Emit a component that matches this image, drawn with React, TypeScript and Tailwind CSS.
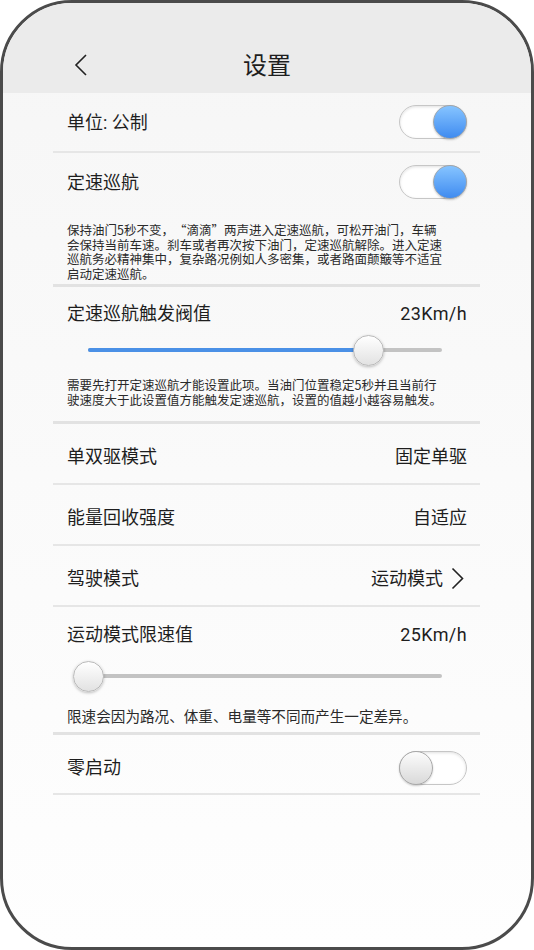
import { ReactNode } from "react";

const font = { fontFamily: 'Roboto, "Noto Sans CJK SC", sans-serif' };
const cjk = { fontFamily: '"Noto Sans CJK SC", Roboto, sans-serif' };

function Toggle({ on }: { on: boolean }) {
    return (
        <div className="relative w-[68px] h-[34px] rounded-full border border-[#c6c6c6] bg-white shadow-[inset_0_1px_3px_rgba(0,0,0,0.12)]">
            <div
                className={
                    on
                        ? "absolute top-[-1px] right-[-1px] w-[34px] h-[34px] rounded-full border border-[#9fa6ad] bg-gradient-to-b from-[#86c4ff] to-[#3f8bf0] shadow-[0_1px_2px_rgba(0,0,0,0.2)]"
                        : "absolute top-[-1px] left-[-1px] w-[34px] h-[34px] rounded-full border border-[#a8a8a8] bg-gradient-to-b from-[#fcfcfc] to-[#d9d9d9] shadow-[0_1px_2px_rgba(0,0,0,0.2)]"
                }
            />
        </div>
    );
}

function Slider({ pct }: { pct: number }) {
    return (
        <div className="relative h-[31px] ml-[35px] mr-[38px]">
            <div className="absolute left-0 right-0 top-[13px] h-[4px] rounded-full bg-[#c3c3c3]" />
            <div className="absolute left-0 top-[13px] h-[4px] rounded-full bg-[#4a90e6]" style={{ width: `${pct}%` }} />
            <div
                className="absolute top-0 w-[31px] h-[31px] -ml-[15px] rounded-full border border-[#b9b9b9] bg-gradient-to-b from-[#ffffff] to-[#e2e2e2] shadow-[0_1px_3px_rgba(0,0,0,0.25)]"
                style={{ left: `${pct}%` }}
            />
        </div>
    );
}

function Divider({ thick }: { thick?: boolean }) {
    return <div className={thick ? "h-[3px] bg-[#e2e2e2]" : "h-[2px] bg-[#e6e6e6]"} />;
}

function Row({ label, right }: { label: string; right: ReactNode }) {
    return (
        <div className="h-[59px] pt-[6px] pl-[14px] pr-[13px] flex items-center justify-between">
            <span className="text-[18px] text-[#1e1e1e]">{label}</span>
            {right}
        </div>
    );
}

function Note({ lines, size }: { lines: ReactNode[]; size: "sm" | "md" }) {
    return (
        <div
            className={size === "sm" ? "pl-[14px] text-[12.5px] leading-[14.5px] text-[#2a2a2a]" : "pl-[14px] text-[14.6px] leading-[18px] text-[#2a2a2a]"}
            style={cjk}
        >
            {lines.map((l, i) => (
                <div key={i} className="whitespace-nowrap">{l}</div>
            ))}
        </div>
    );
}

// full-width curly quotes
const Lq = () => <span className="inline-block w-[1em] text-right">“</span>;
const Rq = () => <span className="inline-block w-[1em] text-left">”</span>;

export default function App() {
    return (
        <div className="w-[534px] h-[950px] bg-white" style={font}>
            <div className="h-full rounded-[72px] border-[3px] border-[#4b4b4b] overflow-hidden flex flex-col bg-gradient-to-b from-[#f6f6f6] to-[#fefefe]">
                {/* title bar */}
                <div className="h-[90px] shrink-0 bg-[#ebebeb] flex items-center justify-center relative">
                    <svg className="absolute left-[71px] top-[50px]" width="14" height="24" viewBox="0 0 14 24" fill="none">
                        <path d="M12 2 L2 12 L12 22" stroke="#222" strokeWidth="1.6" />
                    </svg>
                    <span className="text-[24px] text-[#1e1e1e] mt-[36px]">设置</span>
                </div>

                <div className="ml-[50px] w-[427px]">
                    <div className="h-[58px] pl-[14px] pr-[13px] flex items-center justify-between">
                        <span className="text-[18px] text-[#1e1e1e]">单位: 公制</span>
                        <Toggle on />
                    </div>
                    <Divider />

                    <div className="h-[56px] pt-[2px] pl-[14px] pr-[13px] flex items-center justify-between">
                        <span className="text-[18px] text-[#1e1e1e]">定速巡航</span>
                        <Toggle on />
                    </div>
                    <div className="mt-[14px] mb-[3px]">
                        <Note
                            size="sm"
                            lines={[
                                <>保持油门5秒不变，<Lq />滴滴<Rq />两声进入定速巡航，可松开油门，车辆</>,
                                "会保持当前车速。刹车或者再次按下油门，定速巡航解除。进入定速",
                                "巡航务必精神集中，复杂路况例如人多密集，或者路面颠簸等不适宜",
                                "启动定速巡航。",
                            ]}
                        />
                    </div>
                    <Divider thick />

                    <div className="pt-[14px] pb-[14px]">
                        <div className="h-[24px] pl-[14px] pr-[13px] flex items-center justify-between text-[18px] text-[#1e1e1e]">
                            <span>定速巡航触发阀值</span>
                            <span className="tracking-[0.4px]">23Km/h</span>
                        </div>
                        <div className="mt-[10px]">
                            <Slider pct={79} />
                        </div>
                        <div className="mt-[12px]">
                            <Note
                                size="sm"
                                lines={[
                                    "需要先打开定速巡航才能设置此项。当油门位置稳定5秒并且当前行",
                                    "驶速度大于此设置值方能触发定速巡航，设置的值越小越容易触发。",
                                ]}
                            />
                        </div>
                    </div>
                    <Divider thick />

                    <Row label="单双驱模式" right={<span className="text-[18px] text-[#1e1e1e]">固定单驱</span>} />
                    <Divider />
                    <Row label="能量回收强度" right={<span className="text-[18px] text-[#1e1e1e]">自适应</span>} />
                    <Divider />
                    <Row
                        label="驾驶模式"
                        right={
                            <span className="flex items-center gap-[8px] text-[18px] text-[#1e1e1e]">
                                运动模式
                                <svg width="13" height="23" viewBox="0 0 13 23" fill="none" className="mr-[3px]">
                                    <path d="M1.5 1.5 L11.5 11.5 L1.5 21.5" stroke="#222" strokeWidth="1.6" />
                                </svg>
                            </span>
                        }
                    />
                    <Divider />

                    <div className="pt-[15px] pb-[7px]">
                        <div className="h-[24px] pl-[14px] pr-[13px] flex items-center justify-between text-[18px] text-[#1e1e1e]">
                            <span>运动模式限速值</span>
                            <span className="tracking-[0.4px]">25Km/h</span>
                        </div>
                        <div className="mt-[15px]">
                            <Slider pct={0} />
                        </div>
                        <div className="mt-[15px]">
                            <Note size="md" lines={["限速会因为路况、体重、电量等不同而产生一定差异。"]} />
                        </div>
                    </div>
                    <Divider thick />

                    <div className="h-[58px] pt-[7px] pl-[14px] pr-[13px] flex items-center justify-between">
                        <span className="text-[18px] text-[#1e1e1e]">零启动</span>
                        <Toggle on={false} />
                    </div>
                    <Divider />
                </div>
            </div>
        </div>
    );
}
